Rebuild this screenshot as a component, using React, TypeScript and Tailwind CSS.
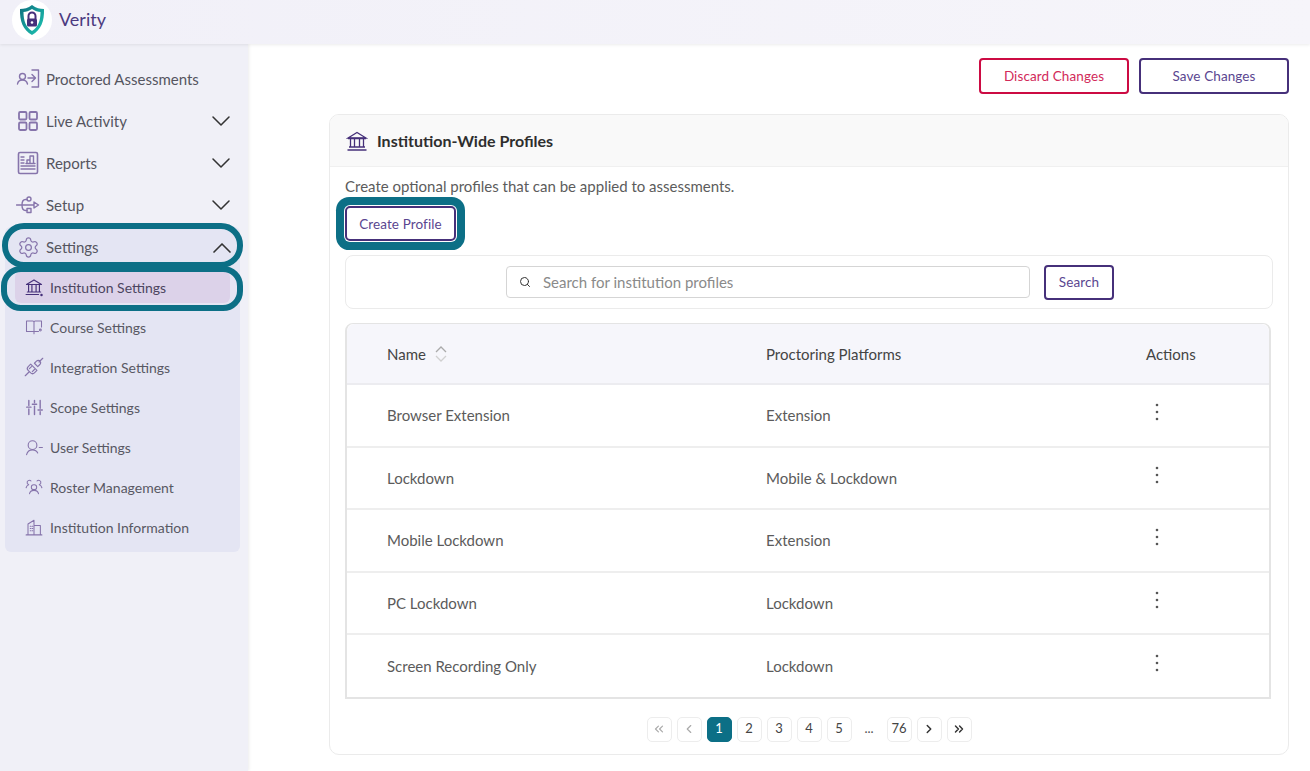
import React from "react";
import { ChevronDown, ChevronUp, ChevronLeft, ChevronRight, ChevronsLeft, ChevronsRight, Search, Settings } from "lucide-react";

const P = "#8674ab";
const Ico = ({ children, w = 24 }: { children: React.ReactNode; w?: number }) => (
  <svg width={w} height={w} viewBox="0 0 24 24" fill="none" stroke={P} strokeWidth="1.4" strokeLinecap="round" strokeLinejoin="round" className="shrink-0">
    {children}
  </svg>
);
const BankPaths = () => (
  <>
    <path d="M3 9 12 3.5 21 9Z" />
    <path d="M3 9.5h18M5.5 10v7.5M9.5 10v7.5M14.5 10v7.5M18.5 10v7.5M4 18h16M2.5 21h19" />
  </>
);
const ProctorIcon = () => (
  <Ico>
    <circle cx="6.5" cy="9.5" r="3" />
    <path d="M1.5 17c.5-3 2.5-4 5-4s4.300 1 5 4M12 11h7M16 7.500 19.500 11 16 14.500M16 3h6.500v17H16" />
  </Ico>
);
const GridIcon = () => (
  <Ico>
    <rect x="3" y="3" width="7.500" height="7.500" rx="1.200" strokeWidth="1.800" />
    <rect x="13.500" y="3" width="7.500" height="7.500" rx="1.200" strokeWidth="1.800" />
    <rect x="3" y="13.500" width="7.500" height="7.500" rx="1.200" strokeWidth="1.800" />
    <rect x="13.500" y="13.500" width="7.500" height="7.500" rx="1.200" strokeWidth="1.800" />
  </Ico>
);
const ReportIcon = () => (
  <Ico>
    <rect x="2.500" y="1.500" width="19" height="21" rx="1.500" strokeWidth="1.600" />
    <path d="M5 6h3M5 9h3M5 12h3M5 15h14M5 18h14M11 12.500V9h3v3.500M14 12.500V5h3.500v7.500M10 12.500h9" />
  </Ico>
);
const UsbIcon = () => (
  <Ico>
    <path d="M0.500 12H18M6 12c0-3 1-5.500 3.500-5.500h1.500M6 12c0 3 1 5.500 3.500 5.500H11M18 9v6l4.500-3Z" />
    <circle cx="13" cy="6" r="2" />
    <rect x="11" y="15.500" width="4" height="4" />
  </Ico>
);
const BookIcon = () => (
  <Ico w={18}>
    <path d="M2 4h8.500c.8 0 1.500.5 1.500 1.500V18H2ZM12 5.500C12 4.500 12.700 4 13.500 4H22v8M12 18h6M12 18v3" />
    <circle cx="20.500" cy="16" r="1.200" />
  </Ico>
);
const PlugIcon = () => (
  <Ico w={20}>
    <path d="M1.500 22.500l4.500-4.500M22.500 1.500l-4.500 4.500M8 8.500 5 11.500c-1.500 1.500-1 3.500 0 4.500l3 3c1 1 3 1.500 4.500 0l3-3ZM12.500 7.500l2.500-2.500c1.500-1.500 3-1 4 0s1.500 2.500 0 4l-2.500 2.500ZM6.500 14l2.500-2.500M10 17.500l2.500-2.500" />
  </Ico>
);
const SliderIcon = () => (
  <Ico w={17}>
    <path d="M4 2v7M4 14v8M12 2v3M12 10v12M20 2v11M20 18v4M1 11.500h6M9 7.500h6M17 15.500h6" strokeWidth="2" />
  </Ico>
);
const UserIcon = () => (
  <Ico w={19}>
    <circle cx="9.500" cy="9" r="5.500" />
    <path d="M2 21c1-4 4-6 7.500-6s5.500 1.500 6.500 4M18 12h4" />
  </Ico>
);
const RosterIcon = () => (
  <Ico w={18}>
    <rect x="8.500" y="9" width="7" height="6.500" rx="3" />
    <path d="M6 21c.5-3 3-4.500 6-4.500s5.500 1.500 6 4.500M8 4a3 3 0 0 0-5 3c.5 1 1.500 1.500 2 2-2 .5-3 2-3.500 4M16 4a3 3 0 0 1 5 3c-.5 1-1.500 1.500-2 2 2 .5 3 2 3.500 4" />
  </Ico>
);
const BuildingIcon = () => (
  <Ico w={18}>
    <path d="M1.500 22.500h21M4 22.500V8l8-5v19.500M12 10h8.500v12.500M7 11h.8M9.500 11h.8M7 14h.8M9.500 14h.8M7 17h.8M9.500 17h.8" />
  </Ico>
);

const Row = ({ icon, label, chevron, className = "" }: { icon: React.ReactNode; label: string; chevron?: boolean; className?: string }) => (
  <div className={`h-[42px] flex items-center pl-[16px] pr-[11px] text-[15px] text-[#55555f] ${className}`}>
    <span className="w-[24px] mr-[6px] flex justify-center">{icon}</span>
    <span className="flex-1">{label}</span>
    {chevron && <ChevronDown size={32} strokeWidth={1.150} color="#333" />}
  </div>
);

const SubRow = ({ icon, label, active }: { icon: React.ReactNode; label: string; active?: boolean }) => (
  <div className="h-[40px] flex items-center">
    <div className={`flex items-center h-[32px] w-[215px] ml-[10px] pl-[10px] rounded-[6px] text-[14px] ${active ? "bg-[#dcd2e9] text-[#4c4560]" : "text-[#585863]"}`}>
      <span className="w-[18px] mr-[7px] flex justify-center">{icon}</span>
      {label}
    </div>
  </div>
);

const Btn = ({ children, red, className = "" }: { children: React.ReactNode; red?: boolean; className?: string }) => (
  <button className={`flex items-center justify-center pt-[1px] rounded-[4px] border-2 bg-white text-[13.500px] tracking-[0.1px] ${red ? "border-[#cc0b43] text-[#d22a5a]" : "border-[#46307a] text-[#5a4690]"} ${className}`}>
    {children}
  </button>
);

const rows = [
  ["Browser Extension", "Extension"],
  ["Lockdown", "Mobile & Lockdown"],
  ["Mobile Lockdown", "Extension"],
  ["PC Lockdown", "Lockdown"],
  ["Screen Recording Only", "Lockdown"],
];

const Page = ({ children, active, dim }: { children: React.ReactNode; active?: boolean; dim?: boolean }) => (
  <div className={`w-[25px] h-[25px] rounded-[5px] flex items-center justify-center text-[13px] border ${active ? "bg-[#0c6f86] border-[#0c6f86] text-white" : "border-[#ededed] text-[#444]"} ${dim ? "text-[#aaa]" : ""}`}>
    {children}
  </div>
);

export default function App() {
  return (
    <div className="w-[1310px] h-[771px] overflow-hidden bg-white flex flex-col font-['Lato','Open_Sans',sans-serif]">
      <header className="h-[44px] shrink-0 flex items-center bg-gradient-to-r from-[#f1f0f8] to-[#f6f5fa] shadow-[0_1px_3px_rgba(0,0,0,0.08)] relative z-10">
        <div className="ml-[12px] w-[40px] h-[40px] rounded-full bg-white flex items-center justify-center -mt-[5px]">
          <svg width="26" height="32" viewBox="0 0 26 32">
            <defs>
              <linearGradient id="sh" x1="0" y1="0" x2="1" y2="1">
                <stop offset="0" stopColor="#0c6f7e" />
                <stop offset="1" stopColor="#20c9b5" />
              </linearGradient>
            </defs>
            <path d="M13 1 C17 4 21 5 25 5 C25.500 17 22 26 13 31 C4 26 .5 17 1 5 C5 5 9 4 13 1Z" fill="url(#sh)" />
            <path d="M13 5 C16 7 19 8 21.500 8 C21.500 17 19 23.500 13 27 C7 23.500 4.500 17 4.500 8 C7 8 10 7 13 5Z" fill="#fff" />
            <path d="M9.500 15v-3a3.500 3.500 0 0 1 7 0v3" fill="none" stroke="#46307a" strokeWidth="2" />
            <rect x="8" y="14.500" width="10" height="8" rx="1.500" fill="#46307a" />
            <circle cx="13" cy="18.500" r="1.300" fill="#fff" />
          </svg>
        </div>
        <span className="ml-[7px] text-[18px] text-[#4b3a80] -mt-[5px]">Verity</span>
      </header>
      <div className="flex-1 flex min-h-0">
        <aside className="w-[248px] shrink-0 bg-[#f0f0f7] pt-[14px] shadow-[1px_0_3px_rgba(0,0,0,0.08)]">
          <Row icon={<ProctorIcon />} label="Proctored Assessments" />
          <Row icon={<GridIcon />} label="Live Activity" chevron />
          <Row icon={<ReportIcon />} label="Reports" chevron />
          <Row icon={<UsbIcon />} label="Setup" chevron className="mb-[1px]" />
          <div className="relative ml-[5px] w-[235px] h-[325px] bg-[#e4e5f3] rounded-[6px]">
            <div className="h-[41px] flex items-center pl-[11px] pr-[2px] text-[15px] text-[#55555f]">
              <span className="w-[24px] mr-[6px] flex justify-center"><Settings size={23} strokeWidth={1.300} color={P} /></span>
              <span className="flex-1">Settings</span>
              <ChevronUp size={32} strokeWidth={1.250} color="#333" />
            </div>
            <div className="-mt-[1px]">
              <SubRow active icon={<Ico w={20}><path d="M3 9 12 3.500 21 9Z" stroke="#46307a" /><path d="M5.500 10v7.500M9.500 10v7.500M14.500 10v7.500M18.500 10v7.500M4 18h16M2.500 21h15" stroke="#46307a" /><circle cx="21" cy="21.500" r="1.500" fill="#46307a" stroke="none" /></Ico>} label="Institution Settings" />
              <SubRow icon={<BookIcon />} label="Course Settings" />
              <SubRow icon={<PlugIcon />} label="Integration Settings" />
              <SubRow icon={<SliderIcon />} label="Scope Settings" />
              <SubRow icon={<UserIcon />} label="User Settings" />
              <SubRow icon={<RosterIcon />} label="Roster Management" />
              <SubRow icon={<BuildingIcon />} label="Institution Information" />
            </div>
            <div className="absolute left-[-3px] top-[-4px] w-[241px] h-[45px] rounded-[22px] border-[6px] border-[#0c6f86]" />
            <div className="absolute left-[-4px] top-[39px] w-[242px] h-[45px] rounded-[20px] border-[6px] border-[#0c6f86]" />
          </div>
        </aside>
        <main className="flex-1 pl-[81px] pr-[21px] pt-[14px] min-w-0">
          <div className="flex justify-end gap-[10px]">
            <Btn red className="w-[150px] h-[36px]">Discard Changes</Btn>
            <Btn className="w-[150px] h-[36px]">Save Changes</Btn>
          </div>
          <section className="mt-[20px] h-[641px] rounded-[10px] border border-[#ebebeb] overflow-hidden">
            <div className="h-[52px] bg-[#f9f9f9] border-b border-[#f0f0f0] flex items-center pl-[15px]">
              <svg width="24" height="24" viewBox="0 0 24 24" fill="none" stroke="#46307a" strokeWidth="1.300"><BankPaths /></svg>
              <span className="ml-[8px] text-[16px] font-bold text-[#2e2e2e]">Institution-Wide Profiles</span>
            </div>
            <div className="px-[15px] pt-[9px]">
              <p className="text-[15px] leading-[20px] text-[#5c5c5c]">Create optional profiles that can be applied to assessments.</p>
              <Btn className="mt-[10px] w-[111px] h-[35px] !pt-[2px] shadow-[0_0_0_1px_#fff,0_0_0_9px_#0c6f86] rounded-[5px]">Create Profile</Btn>
              <div className="mt-[14px] w-[928px] h-[54px] rounded-[8px] border border-[#ebebeb] flex items-center pl-[160px]">
                <div className="w-[524px] h-[32px] rounded-[4px] border border-[#d5d5d5] flex items-center pl-[12px]">
                  <Search size={12} strokeWidth={2} color="#333" />
                  <span className="ml-[12px] text-[15px] text-[#8a8a8a]">Search for institution profiles</span>
                </div>
                <Btn className="ml-[14px] w-[70px] h-[35px]">Search</Btn>
              </div>
              <div className="mt-[14px] w-[926px] border-2 border-t border-[#e4e4e4] rounded-t-[8px] text-[15px]">
                <div className="h-[61px] pt-[1px] bg-[#f6f6fb] flex items-center border-b-2 border-[#ececf0] text-[#444] rounded-t-[8px]">
                  <div className="w-[419px] pl-[40px] flex items-center gap-[9px]">
                    Name
                    <svg width="12" height="18" viewBox="0 0 12 18" fill="none" strokeWidth="1.300"><path d="M1 7l5-5 5 5" stroke="#aaa" /><path d="M1 11l5 5 5-5" stroke="#d0d0d0" /></svg>
                  </div>
                  <div className="w-[380px]">Proctoring Platforms</div>
                  <div>Actions</div>
                </div>
                {rows.map(([a, b], i) => (
                  <div key={a} className={`flex items-center text-[#5b5b5b] ${i < 4 ? "h-[62.500px] border-b-2 border-[#eeeeee]" : "h-[61.500px]"}`}>
                    <div className="w-[419px] pl-[40px]">{a}</div>
                    <div className="w-[380px]">{b}</div>
                    <div className="pl-[5px] -mt-[6px]">
                      <svg width="12" height="20" viewBox="0 0 12 20" fill="#555"><circle cx="6" cy="3" r="1.300" /><circle cx="6" cy="10" r="1.300" /><circle cx="6" cy="17" r="1.300" /></svg>
                    </div>
                  </div>
                ))}
              </div>
              <div className="mt-[18px] flex justify-center gap-[5px]">
                <Page dim><ChevronsLeft size={14} color="#aaa" /></Page>
                <Page dim><ChevronLeft size={14} color="#aaa" /></Page>
                <Page active>1</Page>
                <Page>2</Page>
                <Page>3</Page>
                <Page>4</Page>
                <Page>5</Page>
                <div className="w-[25px] h-[25px] flex items-center justify-center text-[13px] text-[#555]">...</div>
                <Page>76</Page>
                <Page><ChevronRight size={14} color="#333" strokeWidth={2.500} /></Page>
                <Page><ChevronsRight size={14} color="#333" strokeWidth={2.500} /></Page>
              </div>
            </div>
          </section>
        </main>
      </div>
    </div>
  );
}
